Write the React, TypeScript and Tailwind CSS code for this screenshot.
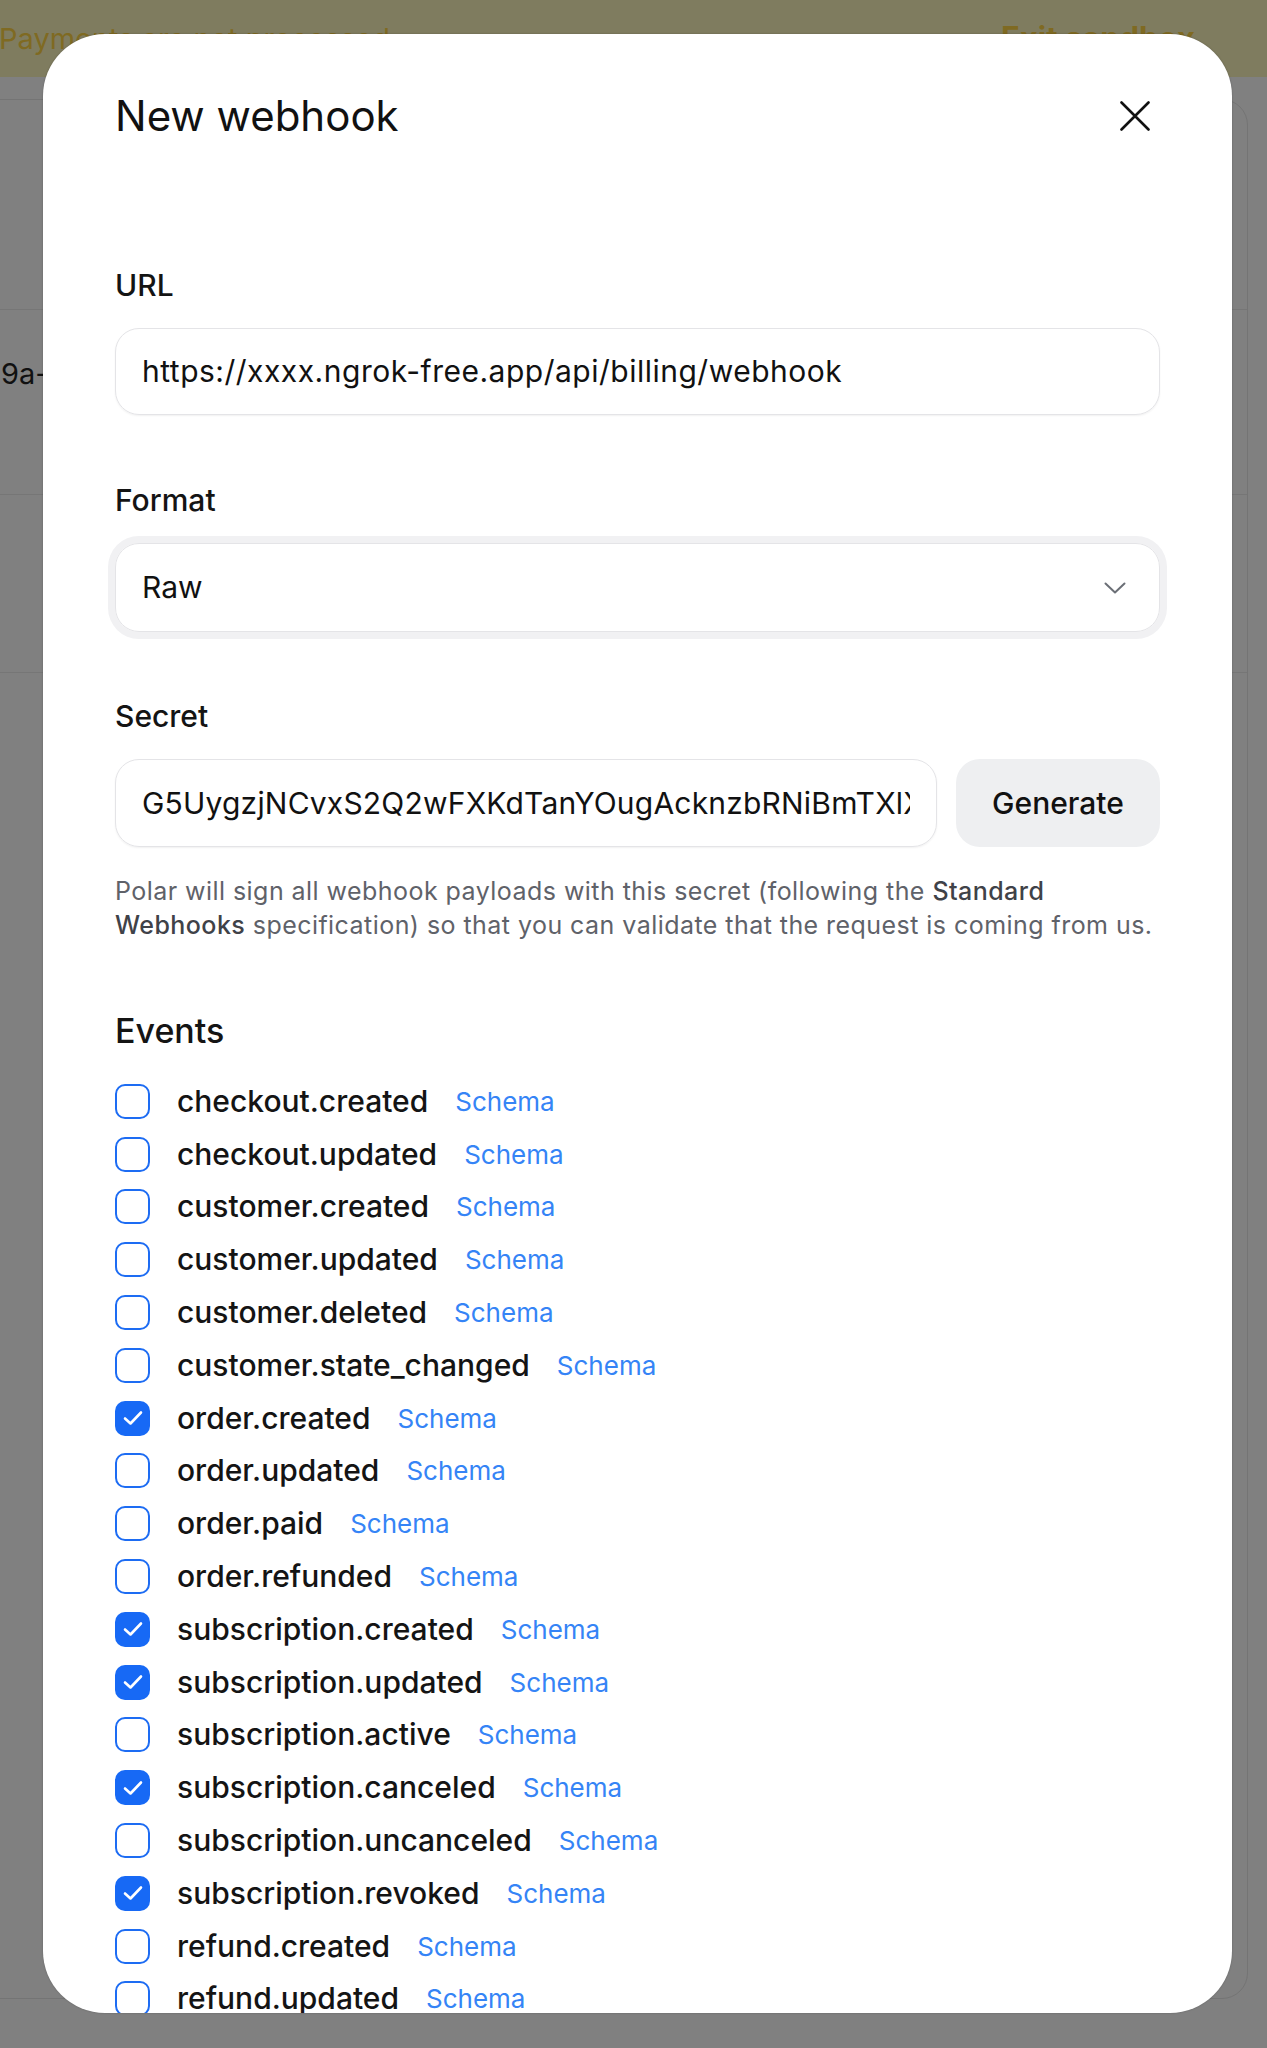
import React from "react";

type EventItem = {
  name: string;
  checked?: boolean;
};

const events: EventItem[] = [
  { name: "checkout.created" },
  { name: "checkout.updated" },
  { name: "customer.created" },
  { name: "customer.updated" },
  { name: "customer.deleted" },
  { name: "customer.state_changed" },
  { name: "order.created", checked: true },
  { name: "order.updated" },
  { name: "order.paid" },
  { name: "order.refunded" },
  { name: "subscription.created", checked: true },
  { name: "subscription.updated", checked: true },
  { name: "subscription.active" },
  { name: "subscription.canceled", checked: true },
  { name: "subscription.uncanceled" },
  { name: "subscription.revoked", checked: true },
  { name: "refund.created" },
  { name: "refund.updated" },
];

function Checkbox({ checked }: { checked?: boolean }) {
  if (checked) {
    return (
      <span className="flex h-[35px] w-[35px] shrink-0 items-center justify-center rounded-[10px] bg-[#1769f5]">
        <svg width="20" height="16" viewBox="0 0 20 16" fill="none">
          <path
            d="M2 8.5 L7.5 13.5 L18 2.5"
            stroke="white"
            strokeWidth="2.6"
            strokeLinecap="round"
            strokeLinejoin="round"
          />
        </svg>
      </span>
    );
  }
  return (
    <span className="h-[35px] w-[35px] shrink-0 rounded-[10px] border-[2.5px] border-[#1d6cf3] bg-white" />
  );
}

function FieldLabel({ children }: { children: React.ReactNode }) {
  return (
    <div className="text-[30px] font-medium leading-[36px] text-[#141414]">
      {children}
    </div>
  );
}

export default function App() {
  return (
    <div className="relative h-[2048px] w-full overflow-hidden bg-[#808080] font-[Inter,'Noto_Sans',sans-serif]">
      {/* page under the overlay */}
      <div className="flex h-[77px] items-center justify-between bg-[#7f7c5f] pr-[72px] text-[29px] text-[#7f6a22]">
        <span className="-ml-[1px]">Payments are not processed</span>
        <span className="text-[31px] font-bold">Exit sandbox</span>
      </div>
      <div className="-ml-[30px] mr-[19px] mt-[22px] h-[1900px] rounded-[26px] border border-[#747474]">
        <div className="h-[210px] border-b border-[#767676]" />
        <div className="h-[185px] border-b border-[#767676] pl-[30px] pt-[46px] text-[29px] leading-[36px] text-[#111]">
          9a-
        </div>
        <div className="h-[178px] border-b border-[#767676]" />
      </div>

      {/* modal */}
      <div className="absolute left-[43px] top-[34px] h-[1979px] w-[1189px] overflow-hidden rounded-[62px] bg-white px-[72px] pt-[57px] shadow-[0_0_2px_rgba(0,0,0,0.25)]">
        <div className="flex items-center justify-between">
          <h2 className="text-[42px] font-normal leading-[50px] text-[#111]">
            New webhook
          </h2>
          <button className="mr-[10px] flex h-[30px] w-[30px] items-center justify-center">
            <svg width="30" height="30" viewBox="0 0 30 30" fill="none">
              <path
                d="M1.5 1.5 L28.5 28.5 M28.5 1.5 L1.5 28.5"
                stroke="#111"
                strokeWidth="2.6"
                strokeLinecap="round"
              />
            </svg>
          </button>
        </div>

        <div className="mt-[126px]">
          <FieldLabel>URL</FieldLabel>
          <div className="mt-[25px] flex h-[87px] items-center rounded-[24px] border-[1.5px] border-[#e4e4e7] px-[26px] text-[30px] tracking-[0.5px] text-[#111] shadow-[0_1px_2px_rgba(0,0,0,0.06)]">
            https://xxxx.ngrok-free.app/api/billing/webhook
          </div>
        </div>

        <div className="mt-[67px]">
          <FieldLabel>Format</FieldLabel>
          <div className="mt-[25px] flex h-[89px] items-center justify-between rounded-[24px] border-[1.5px] border-[#e4e4e7] pl-[26px] pr-[33px] text-[30px] text-[#111] ring-[7px] ring-[#f1f1f3]">
            <span>Raw</span>
            <svg width="22" height="12" viewBox="0 0 22 12" fill="none">
              <path
                d="M1.5 1.5 L11 10.5 L20.5 1.5"
                stroke="#6b6f76"
                strokeWidth="2"
                strokeLinecap="round"
                strokeLinejoin="round"
              />
            </svg>
          </div>
        </div>

        <div className="mt-[66px]">
          <FieldLabel>Secret</FieldLabel>
          <div className="mt-[25px] flex gap-[19px]">
            <div className="flex h-[88px] min-w-0 flex-1 items-center rounded-[24px] border-[1.5px] border-[#e4e4e7] px-[26px] text-[30px] tracking-[0.2px] text-[#111] shadow-[0_1px_2px_rgba(0,0,0,0.06)]">
              <span className="block min-w-0 flex-1 overflow-hidden whitespace-nowrap">
                G5UygzjNCvxS2Q2wFXKdTanYOugAcknzbRNiBmTXlXq7vPz
              </span>
            </div>
            <button className="h-[88px] w-[204px] shrink-0 rounded-[24px] bg-[#eeeff1] text-[30px] font-medium text-[#111]">
              Generate
            </button>
          </div>
          <p className="mt-[27px] text-[25px] leading-[34px] tracking-[0.45px] text-[#5f6269]">
            Polar will sign all webhook payloads with this secret (following the{" "}
            <span className="font-medium text-[#3f4248]">Standard</span>
            <br />
            <span className="font-medium text-[#3f4248]">Webhooks</span>{" "}
            specification) so that you can validate that the request is coming
            from us.
          </p>
        </div>

        <div className="mt-[69px]">
          <h3 className="text-[34px] font-medium leading-[40px] text-[#141414]">
            Events
          </h3>
          <div className="mt-[24px] flex flex-col">
            {events.map((ev) => (
              <div key={ev.name} className="flex h-[52.8px] items-center">
                <Checkbox checked={ev.checked} />
                <span className="ml-[27px] text-[30px] font-medium text-[#141414]">
                  {ev.name}
                </span>
                <span className="ml-[27px] text-[26px] text-[#3584f6]">
                  Schema
                </span>
              </div>
            ))}
          </div>
        </div>
      </div>
    </div>
  );
}
